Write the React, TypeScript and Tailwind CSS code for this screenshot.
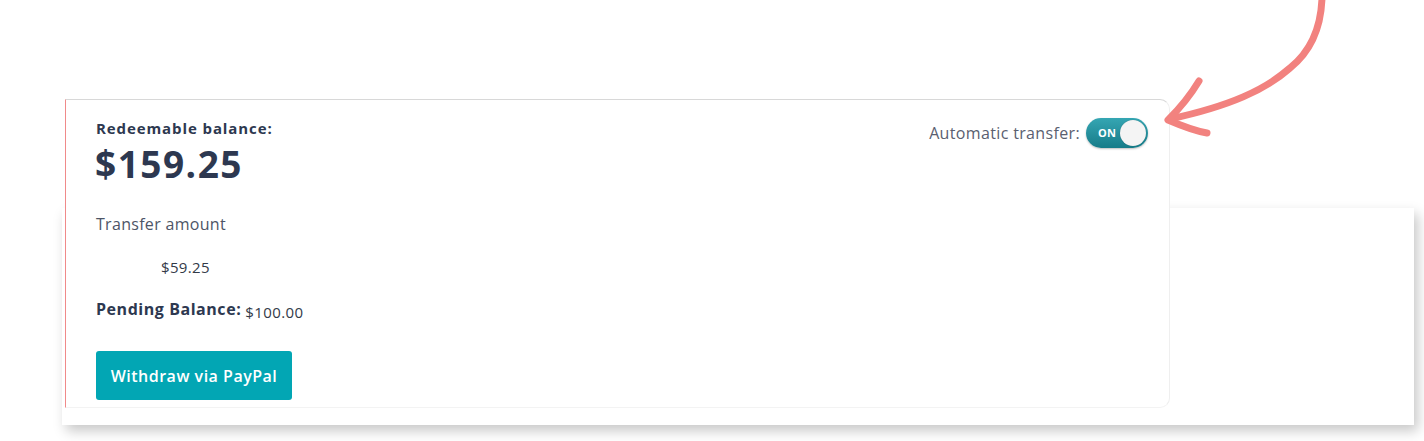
import React from 'react';

const font = { fontFamily: '"Open Sans", "Liberation Sans", sans-serif' };

const Toggle: React.FC = () => (
  <div className="flex items-center w-[62px] h-[30px] rounded-full bg-gradient-to-b from-[#35a6b3] to-[#167c89] p-[2px] shadow-[0_1px_2px_rgba(0,0,0,0.25)]">
    <span className="flex-1 pl-[10px] text-[11px] font-bold text-white tracking-wide">ON</span>
    <span className="w-[26px] h-[26px] rounded-full bg-[#f4f4f4] shadow-[0_0_1px_rgba(0,0,0,0.3)]" />
  </div>
);

const Arrow: React.FC = () => (
  <svg className="absolute left-[1150px] top-0" width="200" height="150" viewBox="1150 0 200 150" fill="none">
    <path
      d="M1322 -2 C1321 28 1310 52 1290 68 C1265 90 1230 106 1170 119"
      stroke="#f2827f"
      strokeWidth="7"
      strokeLinecap="round"
    />
    <path d="M1199 81 C1190 96 1180 108 1168 120 C1182 126 1195 131 1207 133" stroke="#f2827f" strokeWidth="7" strokeLinecap="round" strokeLinejoin="round" />
  </svg>
);

export default function App() {
  return (
    <div className="relative w-[1424px] h-[441px] bg-white overflow-hidden" style={font}>
      <div className="grid">
        {/* back panel */}
        <div className="col-start-1 row-start-1 mt-[208px] ml-[62px] w-[1352px] h-[217px] bg-white shadow-[4px_6px_12px_rgba(0,0,0,0.22)]" />

        {/* front card */}
        <div className="col-start-1 row-start-1 mt-[99px] ml-[65px] w-[1105px] h-[309px] bg-white border-l border-l-[#f08a8a] border-t border-t-[#d8d8d8] border-r border-r-[#efefef] border-b border-b-[#f3f3f3] rounded-r-[10px] flex justify-between pl-[30px] pr-[21px]">
          <div className="flex flex-col text-[#2d3850]">
            <div className="mt-[18px] text-[15px] leading-[20px] font-bold tracking-[0.9px]">Redeemable balance:</div>
            <div className="mt-[1px] -ml-[1px] text-[37px] font-bold leading-[50px] tracking-[1.5px]">$159.25</div>
            <div className="mt-[24px] text-[16px] leading-[22px] text-[#4d5566] tracking-[0.3px]">Transfer amount</div>
            <div className="mt-[22px] ml-[65px] text-[15px] leading-[20px] text-[#333a48] tracking-[0.35px]">$59.25</div>
            <div className="mt-[22px] flex items-end gap-[4px]">
              <span className="text-[16px] leading-[21px] font-bold tracking-[0.55px]">Pending Balance:</span>
              <span className="text-[15px] leading-[21px] text-[#333a48] tracking-[0.4px] translate-y-[3px]">$100.00</span>
            </div>
            <button className="mt-[31px] w-[196px] h-[49px] rounded-[3px] bg-[#02a6b4] text-white text-[16px] font-semibold tracking-[0.5px]">
              Withdraw via PayPal
            </button>
          </div>
          <div className="mt-[18px] flex items-start gap-[6px]">
            <span className="mt-[4px] text-[16px] leading-[22px] text-[#5a6070] tracking-[0.35px]">Automatic transfer:</span>
            <Toggle />
          </div>
        </div>
      </div>
      <Arrow />
    </div>
  );
}
